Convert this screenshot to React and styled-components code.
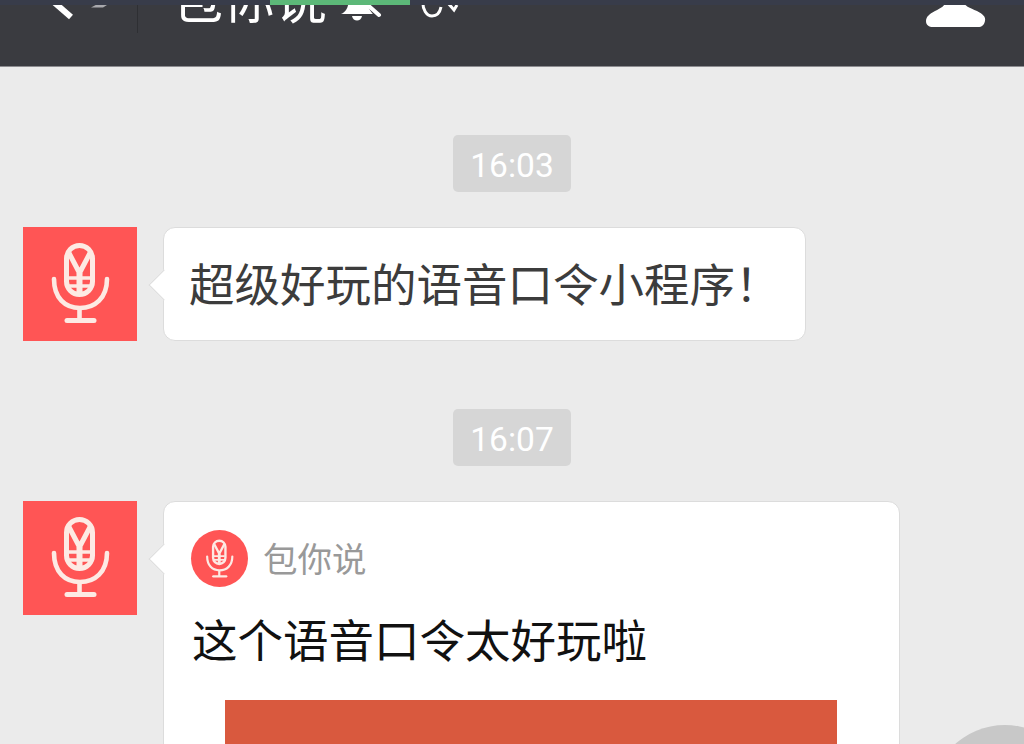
import styled, { createGlobalStyle } from "styled-components";

const GlobalStyle = createGlobalStyle`
  html, body {
    margin: 0;
    padding: 0;
    background: #ebebeb;
  }
  * {
    box-sizing: border-box;
  }
`;

const Page = styled.div`
  position: relative;
  width: 1024px;
  height: 744px;
  overflow: hidden;
  background: #ebebeb;
  font-family: "Noto Sans CJK SC", "Noto Sans", sans-serif;
`;

const StatusStrip = styled.div`
  position: absolute;
  top: 0;
  left: 0;
  right: 0;
  height: 5px;
  background: #383c4a;
  z-index: 2;
`;

const CallPill = styled.div`
  position: absolute;
  top: 0;
  left: 270px;
  width: 140px;
  height: 5px;
  background: #5cb878;
  z-index: 3;
`;

const Header = styled.header`
  height: 67px;
  display: flex;
  align-items: flex-start;
  background: #3a3b40;
  border-bottom: 1px solid #8c8c90;
  overflow: hidden;
`;

const NavIcon = styled.svg`
  flex: none;
  display: block;
  margin-left: ${(props) => props.$left || 0}px;
`;

const Divider = styled.div`
  flex: none;
  width: 1px;
  height: 33px;
  margin-left: 19px;
  background: #2e2f33;
`;

const Title = styled.div`
  flex: none;
  width: 156px;
  height: 33px;
  margin-left: 33px;
  color: #fff;
  white-space: nowrap;
  display: flex;
  align-items: flex-end;
  & > span {
    display: block;
    font-size: 52px;
    line-height: 52px;
    margin-bottom: 10px;
  }
`;

const Chat = styled.main`
  display: flex;
  flex-direction: column;
  padding: 68px 0 0 23px;
`;

const TimeChip = styled.div`
  align-self: center;
  width: 118px;
  height: 57px;
  margin-left: -23px;
  margin-bottom: ${(props) => props.$gap}px;
  padding-top: 3px;
  display: flex;
  align-items: center;
  justify-content: center;
  border-radius: 5px;
  background: #d6d6d6;
  color: #fff;
  font-family: Roboto, sans-serif;
  font-size: 33.5px;
`;

const MessageRow = styled.div`
  display: flex;
  align-items: flex-start;
  gap: 26px;
  margin-bottom: ${(props) => props.$gap || 0}px;
`;

const Avatar = styled.svg`
  flex: none;
  display: block;
  width: 114px;
  height: 114px;
  background: #ff5555;
`;

const Bubble = styled.div`
  position: relative;
  background: #fff;
  border: 1px solid #dcdcdc;
  border-radius: 12px;
  &::before {
    content: "";
    position: absolute;
    top: 46px;
    left: -11px;
    width: 21px;
    height: 21px;
    background: #fff;
    border-left: 1px solid #dcdcdc;
    border-bottom: 1px solid #dcdcdc;
    transform: rotate(45deg);
  }
`;

const TextBubble = styled(Bubble)`
  width: 643px;
  height: 114px;
  padding: 0 0 4px 25px;
  display: flex;
  align-items: center;
  color: #3c3c3c;
  font-size: 45.5px;
  white-space: nowrap;
`;

const CardBubble = styled(Bubble)`
  width: 737px;
  height: 300px;
  padding: 28px 61px 0 27px;
`;

const Source = styled.div`
  display: flex;
  align-items: center;
  gap: 15px;
  height: 57px;
  color: #999;
  font-size: 34.5px;
`;

const SourceName = styled.span`
  display: block;
  margin-bottom: 3px;
`;

const SourceLogo = styled.svg`
  flex: none;
  display: block;
  width: 57px;
  height: 57px;
  border-radius: 50%;
  background: #ff5555;
`;

const CardTitle = styled.div`
  margin: 22px 0 0 1px;
  color: #111;
  font-size: 45.5px;
  line-height: 58px;
  white-space: nowrap;
`;

const Cover = styled.div`
  width: 612px;
  height: 120px;
  margin: 33px 0 0 34px;
  background: #d9593e;
`;

const FloatButton = styled.div`
  position: absolute;
  left: 930px;
  top: 725px;
  width: 150px;
  height: 150px;
  border-radius: 50%;
  background: #c8c8c8;
`;

const MicMark = () => (
  <g fill="none" stroke="#fdeae4" strokeLinejoin="round">
    <rect x="43.5" y="18.5" width="26" height="49" rx="13" strokeWidth="5" />
    <path d="M46 26 L56.5 46 L67 26" strokeWidth="5" />
    <path d="M56.5 46 V68" strokeWidth="6" />
    <path d="M45 51 H68 M45 59 H68" strokeWidth="3.6" />
    <path
      d="M31 52 C31 71 42 81 57 81 C72 81 84 71 84 52"
      strokeWidth="4.6"
      strokeLinecap="round"
    />
    <path d="M56.5 81 V93" strokeWidth="4.6" />
    <path d="M44 93.5 H71" strokeWidth="5" strokeLinecap="round" />
  </g>
);

const App = () => {
  return (
    <Page>
      <GlobalStyle />
      <StatusStrip />
      <CallPill />
      <Header>
        <NavIcon $left={48} width={70} height={33} viewBox="0 0 70 33">
          <path d="M0 -3 L23 17" stroke="#fff" strokeWidth="6" fill="none" />
          <path d="M43 7.5 L55 7.5 L67 0 L57 0 Z" fill="#a9a9ad" />
        </NavIcon>
        <Divider />
        <Title>
          <span>包你说</span>
        </Title>
        <NavIcon $left={13} width={46} height={33} viewBox="0 0 46 33">
          <path d="M1 14 C6 12 8 8 9 0 H26 C28 8 31 12 33 14 Z" fill="#fff" />
          <path d="M12 16 H22 C21 22 13 22 12 16 Z" fill="#fff" />
          <path
            d="M22 0 L39 15"
            stroke="#fff"
            strokeWidth="4"
            strokeLinecap="round"
            fill="none"
          />
        </NavIcon>
        <NavIcon $left={34} width={40} height={33} viewBox="0 0 40 33">
          <path
            d="M3 0 C2 10 7 16 12 16 C17 16 20 12 21 7"
            stroke="#fff"
            strokeWidth="3"
            fill="none"
          />
          <path d="M28 3 L34 10 L37 5" stroke="#fff" strokeWidth="3" fill="none" />
        </NavIcon>
        <NavIcon $left={466} width={60} height={33} viewBox="0 0 60 33">
          <path
            d="M21 0 H36 C38 6 44 8 51 11 C57 14 60 17 59 21 C58 25 56 27 52 27 H7 C3 27 0 25 0 21 C0 17 3 14 9 11 C15 8 19 6 21 0 Z"
            fill="#fff"
          />
        </NavIcon>
      </Header>
      <Chat>
        <TimeChip $gap={35}>16:03</TimeChip>
        <MessageRow $gap={68}>
          <Avatar viewBox="0 0 114 114">
            <MicMark />
          </Avatar>
          <TextBubble>超级好玩的语音口令小程序！</TextBubble>
        </MessageRow>
        <TimeChip $gap={35}>16:07</TimeChip>
        <MessageRow>
          <Avatar viewBox="0 0 114 114">
            <MicMark />
          </Avatar>
          <CardBubble>
            <Source>
              <SourceLogo viewBox="-3 -4 120 120">
                <MicMark />
              </SourceLogo>
              <SourceName>包你说</SourceName>
            </Source>
            <CardTitle>这个语音口令太好玩啦</CardTitle>
            <Cover />
          </CardBubble>
        </MessageRow>
      </Chat>
      <FloatButton />
    </Page>
  );
};

export default App;
